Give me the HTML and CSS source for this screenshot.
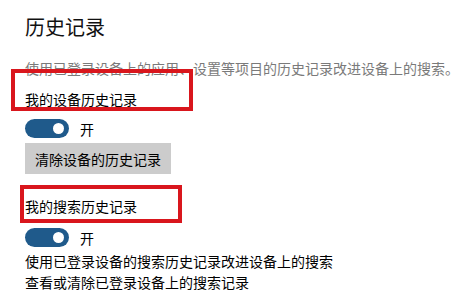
FILE: index.html
```html
<!DOCTYPE html>
<html lang="zh-CN">
<head>
<meta charset="utf-8">
<link rel="stylesheet" href="styles.css">
</head>
<body>
<div class="page">
  <h1 class="title">历史记录</h1>
  <p class="desc">使用已登录设备上的应用、设置等项目的历史记录改进设备上的搜索。</p>
  <div class="label label-first">我的设备历史记录</div>
  <div class="toggle-row toggle-row-first">
    <span class="toggle"><span class="knob"></span></span>
    <span class="toggle-text">开</span>
  </div>
  <button class="btn">清除设备的历史记录</button>
  <div class="label label-second">我的搜索历史记录</div>
  <div class="toggle-row toggle-row-second">
    <span class="toggle"><span class="knob"></span></span>
    <span class="toggle-text">开</span>
  </div>
  <p class="line line-first">使用已登录设备的搜索历史记录改进设备上的搜索</p>
  <p class="line">查看或清除已登录设备上的搜索记录</p>
  <div class="mark mark-one"></div>
  <div class="mark mark-two"></div>
</div>
</body>
</html>
```
FILE: styles.css
```css
html, body {
  margin: 0;
  padding: 0;
  background: #ffffff;
}
body {
  width: 470px;
  height: 293px;
  overflow: hidden;
  font-family: "Noto Sans CJK SC", "Noto Sans", sans-serif;
  color: #1a1a1a;
}
.page {
  position: relative;
  padding: 16px 0 0 25px;
  height: 277px;
}
.title {
  margin: 0;
  font-size: 20px;
  line-height: 22px;
  font-weight: 400;
  color: #111;
}
.desc {
  margin: 22px 0 0;
  font-size: 14px;
  line-height: 16px;
  color: #7a7a7a;
  white-space: nowrap;
}
.label {
  font-size: 14px;
  line-height: 16px;
  color: #000;
}
.label-first { margin-top: 15px; }
.label-second { margin-top: 24px; }
.toggle-row {
  display: flex;
  align-items: center;
  height: 19px;
  gap: 11px;
}
.toggle-row-first { margin-top: 12px; }
.toggle-row-second { margin-top: 14px; }
.toggle {
  display: flex;
  align-items: center;
  justify-content: flex-end;
  box-sizing: border-box;
  width: 44px;
  height: 19px;
  border-radius: 10px;
  background: #1f5a8b;
  padding-right: 5px;
}
.knob {
  width: 11px;
  height: 11px;
  border-radius: 50%;
  background: #ffffff;
}
.toggle-text {
  font-size: 14px;
  line-height: 16px;
  color: #000;
}
.btn {
  display: block;
  margin: 5px 0 0;
  height: 31px;
  padding: 0 10px;
  border: none;
  background: #cccccc;
  font-family: inherit;
  font-size: 14px;
  line-height: 16px;
  color: #000;
}
.line {
  margin: 0;
  font-size: 14px;
  line-height: 21px;
  color: #000;
  white-space: nowrap;
}
.line-first { margin-top: 4px; }
.mark {
  position: absolute;
  box-sizing: border-box;
  border: 4px solid #d9161d;
}
.mark-one {
  left: 11px;
  top: 69px;
  width: 182px;
  height: 42px;
}
.mark-two {
  left: 20px;
  top: 185px;
  width: 162px;
  height: 38px;
}
```
